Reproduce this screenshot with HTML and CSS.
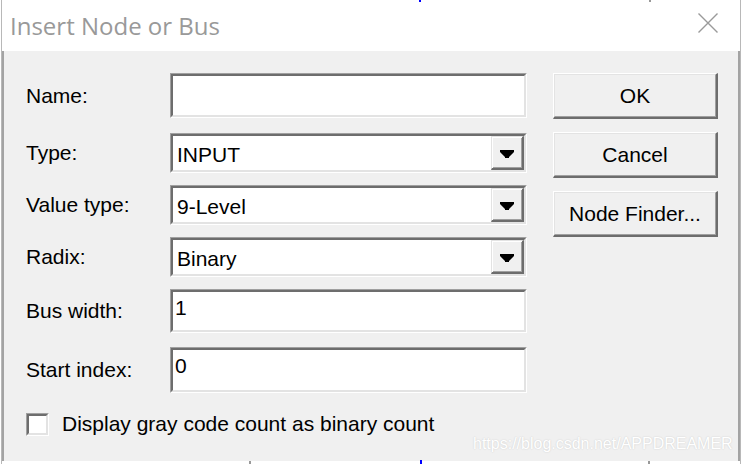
FILE: index.html
```html
<!DOCTYPE html>
<html>
<head>
<meta charset="utf-8">
<link rel="stylesheet" href="styles.css">
</head>
<body>
<div class="window">
  <div class="titlebar">
    <span class="title">Insert Node or Bus</span>
    <svg class="close" width="20" height="20" viewBox="0 0 20 20"><path d="M0.5 0.5 L19.5 19.5 M19.5 0.5 L0.5 19.5" stroke="#9a9a9a" stroke-width="1.4" fill="none"/></svg>
  </div>
  <div class="client">
    <div class="form">
      <div class="row">
        <span class="lbl">Name:</span>
        <div class="field h45"><div class="inner edit"></div></div>
      </div>
      <div class="row row-type">
        <span class="lbl">Type:</span>
        <div class="field h40"><div class="inner combo"><span class="val">INPUT</span><span class="drop"><svg width="14" height="8" viewBox="0 0 14 8"><path d="M0 0 H14 V2 L9 7 V8 H5 V7 L0 2 Z" fill="#000"/></svg></span></div></div>
      </div>
      <div class="row">
        <span class="lbl">Value type:</span>
        <div class="field h40"><div class="inner combo"><span class="val">9-Level</span><span class="drop"><svg width="14" height="8" viewBox="0 0 14 8"><path d="M0 0 H14 V2 L9 7 V8 H5 V7 L0 2 Z" fill="#000"/></svg></span></div></div>
      </div>
      <div class="row">
        <span class="lbl">Radix:</span>
        <div class="field h40"><div class="inner combo"><span class="val">Binary</span><span class="drop"><svg width="14" height="8" viewBox="0 0 14 8"><path d="M0 0 H14 V2 L9 7 V8 H5 V7 L0 2 Z" fill="#000"/></svg></span></div></div>
      </div>
      <div class="row">
        <span class="lbl">Bus width:</span>
        <div class="field h44"><div class="inner edit"><span class="val">1</span></div></div>
      </div>
      <div class="row row-start">
        <span class="lbl">Start index:</span>
        <div class="field h46"><div class="inner edit"><span class="val">0</span></div></div>
      </div>
      <div class="check-row">
        <span class="checkbox"><span class="check-inner"></span></span>
        <span class="check-label">Display gray code count as binary count</span>
      </div>
    </div>
    <div class="buttons">
      <div class="btn"><div class="btn-inner">OK</div></div>
      <div class="btn"><div class="btn-inner">Cancel</div></div>
      <div class="btn"><div class="btn-inner">Node Finder...</div></div>
    </div>
    <div class="watermark">https://blog.csdn.net/APPDREAMER</div>
  </div>
</div>
<span class="tick tick-top-blue"></span>
<span class="tick tick-top-gray"></span>
<span class="tick tick-bot-gray1"></span>
<span class="tick tick-bot-blue"></span>
<span class="tick tick-bot-gray2"></span>
</body>
</html>
```
FILE: styles.css
```css
html, body {
  margin: 0;
  padding: 0;
  background: #ffffff;
}
body {
  width: 742px;
  height: 464px;
  overflow: hidden;
  position: relative;
  font-family: "Liberation Sans", Arial, sans-serif;
  font-size: 21px;
  color: #000;
}
.window {
  margin-left: 1px;
  width: 740px;
  height: 464px;
  box-sizing: border-box;
  border-left: 1px solid #b8b8b8;
  border-right: 1px solid #b8b8b8;
  background: #fff;
}
.titlebar {
  height: 51px;
  display: flex;
  justify-content: space-between;
  align-items: center;
  padding: 0 22px 0 8px;
  background: #fff;
}
.title {
  font-family: "Open Sans", "Noto Sans", sans-serif;
  font-size: 24px;
  line-height: 32px;
  color: #999999;
}
.close {
  align-self: flex-start;
  margin-top: 13px;
  display: block;
}
.client {
  position: relative;
  height: 410px;
  box-sizing: border-box;
  background: #f0f0f0;
  border-left: 2px solid #a3a3a3;
  border-right: 2px solid #a3a3a3;
  display: flex;
  align-items: flex-start;
  padding: 22px 0 0 22px;
}
.form {
  display: flex;
  flex-direction: column;
  gap: 12px;
  width: 501px;
}
.row {
  display: flex;
  align-items: center;
}
.row-type { margin-top: 3px; }
.row-start { margin-top: 2px; }
.lbl {
  width: 144px;
  flex: none;
  line-height: 24px;
}
.field {
  width: 357px;
  box-sizing: border-box;
  border-style: solid;
  border-width: 1px;
  border-color: #a0a0a0 #ffffff #ffffff #a0a0a0;
  display: flex;
}
.h40 { height: 40px; }
.h44 { height: 44px; }
.h45 { height: 45px; }
.h46 { height: 46px; }
.inner {
  flex: 1;
  background: #fff;
  border-style: solid;
  border-width: 2px;
  border-color: #6d6d6d #e3e3e3 #e3e3e3 #6d6d6d;
  display: flex;
  line-height: 24px;
}
.edit {
  align-items: flex-start;
  padding: 4px 0 0 2px;
}
.combo {
  align-items: stretch;
  padding-left: 4px;
}
.combo .val {
  flex: 1;
  padding-top: 7px;
}
.drop {
  width: 33px;
  box-sizing: border-box;
  background: #f0f0f0;
  border-style: solid;
  border-width: 1px 2px 2px 1px;
  border-color: #e3e3e3 #6d6d6d #6d6d6d #e3e3e3;
  box-shadow: inset 1px 1px 0 #ffffff, inset -1px -1px 0 #a0a0a0;
  display: flex;
  align-items: center;
  justify-content: center;
  padding-top: 3px;
}
.drop svg { display: block; }
.check-row {
  display: flex;
  align-items: center;
  margin-top: 7px;
  gap: 13px;
}
.checkbox {
  width: 23px;
  height: 23px;
  box-sizing: border-box;
  border-style: solid;
  border-width: 1px;
  border-color: #a0a0a0 #ffffff #ffffff #a0a0a0;
  display: flex;
}
.check-inner {
  flex: 1;
  background: #fff;
  border-style: solid;
  border-width: 2px;
  border-color: #6d6d6d #e3e3e3 #e3e3e3 #6d6d6d;
}
.check-label {
  line-height: 24px;
}
.buttons {
  margin-left: 26px;
  width: 165px;
  display: flex;
  flex-direction: column;
  gap: 13px;
}
.btn {
  height: 46px;
  box-sizing: border-box;
  border-style: solid;
  border-width: 1px 2px 2px 1px;
  border-color: #ffffff #6d6d6d #6d6d6d #ffffff;
  display: flex;
}
.btn-inner {
  flex: 1;
  border-style: solid;
  border-width: 1px;
  border-color: #e3e3e3 #a0a0a0 #a0a0a0 #e3e3e3;
  background: #f0f0f0;
  display: flex;
  align-items: center;
  justify-content: center;
  line-height: 24px;
}
.watermark {
  position: absolute;
  left: 469px;
  top: 383px;
  font-family: "Liberation Sans", Arial, sans-serif;
  font-size: 16px;
  line-height: 20px;
  color: #ffffff;
  text-shadow: 0 0 1.5px #c4c4c4;
}
.tick {
  position: absolute;
  width: 2px;
}
.tick-top-blue { left: 419px; top: 0; height: 2px; background: #0000ff; }
.tick-top-gray { left: 649px; top: 0; height: 2px; background: #999; }
.tick-bot-gray1 { left: 249px; top: 461px; height: 3px; background: #999; }
.tick-bot-blue { left: 420px; top: 460px; height: 4px; background: #0000ff; }
.tick-bot-gray2 { left: 648px; top: 461px; height: 3px; background: #999; }
```
